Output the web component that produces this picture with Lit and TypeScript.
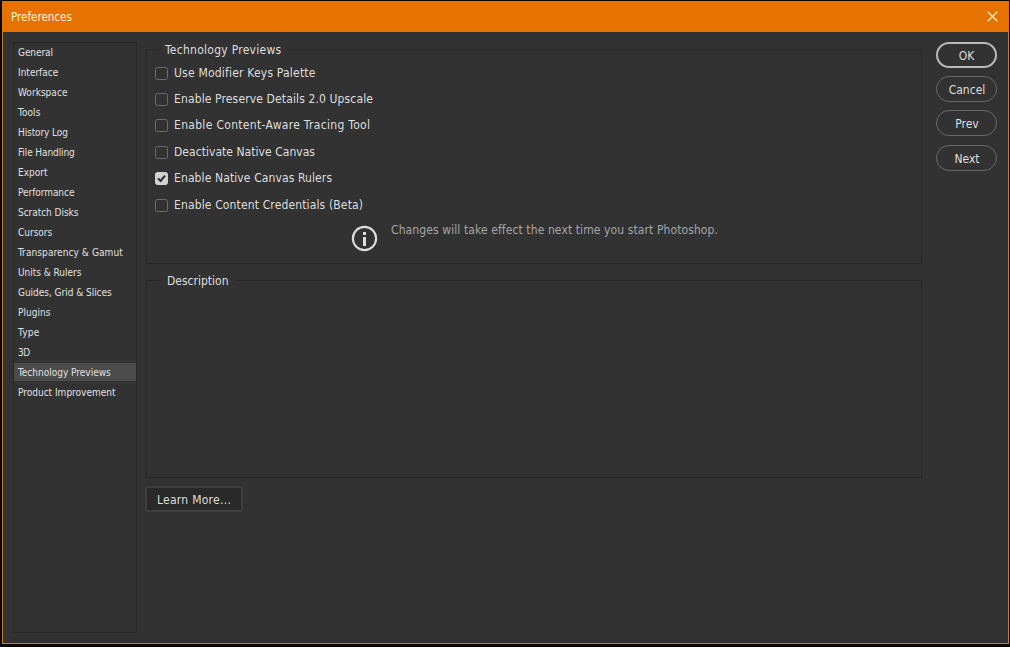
import { LitElement, html, css, svg } from "lit";
import { customElement, property } from "lit/decorators.js";
import { classMap } from "lit/directives/class-map.js";
import { styleMap } from "lit/directives/style-map.js";

const SECTIONS = [
  { name: "General", track: -0.08 },
  { name: "Interface", track: 0 },
  { name: "Workspace", track: 0.04 },
  { name: "Tools", track: 0.1 },
  { name: "History Log", track: -0.1 },
  { name: "File Handling", track: -0.1 },
  { name: "Export", track: 0 },
  { name: "Performance", track: -0.05 },
  { name: "Scratch Disks", track: -0.04 },
  { name: "Cursors", track: 0 },
  { name: "Transparency & Gamut", track: 0.09 },
  { name: "Units & Rulers", track: -0.02 },
  { name: "Guides, Grid & Slices", track: -0.03 },
  { name: "Plugins", track: 0.05 },
  { name: "Type", track: 0.3 },
  { name: "3D", track: -0.4 },
  { name: "Technology Previews", track: 0 },
  { name: "Product Improvement", track: 0 },
];

const OPTIONS = [
  { label: "Use Modifier Keys Palette", on: false, track: 0.2 },
  { label: "Enable Preserve Details 2.0 Upscale", on: false, track: 0.13 },
  { label: "Enable Content-Aware Tracing Tool", on: false, track: 0.31 },
  { label: "Deactivate Native Canvas", on: false, track: 0.04 },
  { label: "Enable Native Canvas Rulers", on: true, track: 0.11 },
  { label: "Enable Content Credentials (Beta)", on: false, track: 0.14 },
];

@customElement("pref-check")
export class PrefCheck extends LitElement {
  @property({ type: Boolean }) checked = false;
  @property() label = "";
  @property({ type: Number }) track = 0;

  static styles = css`
    :host { display: flex; align-items: center; height: 16px; }
    .box {
      box-sizing: border-box; width: 13px; height: 13px; margin: 1px 6px 0 0;
      border: 1px solid #6b6b6b; border-radius: 2.5px; flex: none; display: block;
    }
    .on { background: #d2d2d2; border-color: #d2d2d2; }
    .box svg { display: block; width: 11px; height: 11px; }
    .text { white-space: nowrap; }
  `;

  render() {
    return html`
      <span class=${classMap({ box: true, on: this.checked })}>
        ${this.checked
          ? html`<svg viewBox="0 0 11 11">${svg`<path d="M2 5.4 L4.6 8 L9 2.7" fill="none" stroke="#2b2b2b" stroke-width="2"/>`}</svg>`
          : null}
      </span>
      <span class="text" style=${styleMap({ letterSpacing: `${this.track}px` })}>${this.label}</span>
    `;
  }
}

@customElement("app-root")
export class AppRoot extends LitElement {
  static styles = css`
    :host {
      display: block; box-sizing: border-box; width: 1010px; height: 647px;
      padding: 1px 1px 3px 2px; background: #0a0604; color: #dedede;
      font: 12px/16px "DejaVu Sans Condensed", "DejaVu Sans", sans-serif;
      font-stretch: condensed; overflow: hidden;
    }
    .window {
      box-sizing: border-box; height: 643px; background: #323232;
      border: 1px solid #c17a32; border-top: 0; display: flex; flex-direction: column;
    }
    .title {
      height: 31px; margin: 0 -1px; background: #e67300; color: #fff3dc; flex: none;
      display: flex; align-items: center; justify-content: space-between;
      padding: 0 11px 0 9px; box-sizing: border-box; font-size: 11.5px;
    }
    .title svg { width: 11px; height: 11px; display: block; }
    .body { flex: 1; display: flex; align-items: flex-start; padding: 10px 11px 0 10px; }
    .nav {
      box-sizing: border-box; width: 124px; height: 591px; border: 1px solid #282828;
      display: flex; flex-direction: column; gap: 2px; font-size: 10px; flex: none;
    }
    .item {
      box-sizing: border-box; height: 18px; line-height: 16px; padding: 2px 0 0 4px;
      white-space: nowrap; color: #e0e0e0;
    }
    .active { background: #4b4b4b; }
    .main { width: 776px; margin-left: 9px; display: flex; flex-direction: column; flex: none; }
    .group { box-sizing: border-box; border: 1px solid #282828; border-top: 0; }
    .legend { display: flex; align-items: center; height: 16px; margin: -8px -1px 0; }
    .legend::before { content: ""; width: 15px; height: 1px; background: #282828; }
    .legend::after { content: ""; flex: 1; height: 1px; background: #282828; }
    .legend span { padding: 2px 6px 0 4px; white-space: nowrap; }
    .previews { height: 215px; margin-top: 7px; }
    .previews .legend span { letter-spacing: 0.27px; }
    .description { height: 198px; margin-top: 16px; }
    .description .legend span { padding-left: 6px; }
    .checks { display: flex; flex-direction: column; gap: 10.4px; padding: 7.6px 0 0 8px; }
    .notice { display: flex; color: #a5a5a5; padding: 8.4px 0 0 204px; gap: 13px; }
    .notice svg { width: 27px; height: 27px; display: block; margin-top: 4px; }
    .notice span { margin-top: 1px; white-space: nowrap; letter-spacing: 0.1px; }
    .learn {
      box-sizing: border-box; width: 98px; height: 26px; margin: 8px 0 0 -1px;
      border: 2px solid #3e3e3e; border-radius: 3px; background: #292929; color: #dedede;
      font: inherit; padding: 2px 0 0; text-align: center; letter-spacing: 0.28px;
    }
    .actions { display: flex; flex-direction: column; gap: 8px; margin-left: 14px; width: 61px; }
    .pill {
      box-sizing: border-box; width: 61px; height: 26px; border: 1.5px solid #686868;
      border-radius: 13px; background: none; color: #dedede; font: inherit; padding: 2px 0 0 1px;
    }
    .pill:last-child { margin-top: 1px; }
    .primary { border: 2px solid #b9b9b9; padding-left: 0; }
  `;

  render() {
    return html`
      <div class="window">
        <div class="title">
          <span>Preferences</span>
          <svg viewBox="0 0 11 11"><path d="M.7 .7 L10.3 10.3 M10.3 .7 L.7 10.3" stroke="#ffeccb" stroke-width="1.3"/></svg>
        </div>
        <div class="body">
          <nav class="nav">
            ${SECTIONS.map((s) => html`<div
              class=${classMap({ item: true, active: s.name === "Technology Previews" })}
              style=${styleMap({ letterSpacing: `${s.track}px` })}
            >${s.name}</div>`)}
          </nav>
          <main class="main">
            <section class="group previews">
              <div class="legend"><span>Technology Previews</span></div>
              <div class="checks">
                ${OPTIONS.map((o) => html`<pref-check .label=${o.label} .checked=${o.on} .track=${o.track}></pref-check>`)}
              </div>
              <div class="notice">
                <svg viewBox="0 0 27 27">
                  <circle cx="13.5" cy="13.5" r="11.6" fill="none" stroke="#dcdcdc" stroke-width="2.1"/>
                  <rect x="12" y="7" width="3" height="3" fill="#dcdcdc"/>
                  <rect x="12" y="12" width="3" height="9" fill="#dcdcdc"/>
                </svg>
                <span>Changes will take effect the next time you start Photoshop.</span>
              </div>
            </section>
            <section class="group description">
              <div class="legend"><span>Description</span></div>
            </section>
            <button class="learn">Learn More...</button>
          </main>
          <div class="actions">
            <button class="pill primary">OK</button>
            <button class="pill">Cancel</button>
            <button class="pill">Prev</button>
            <button class="pill">Next</button>
          </div>
        </div>
      </div>
    `;
  }
}
